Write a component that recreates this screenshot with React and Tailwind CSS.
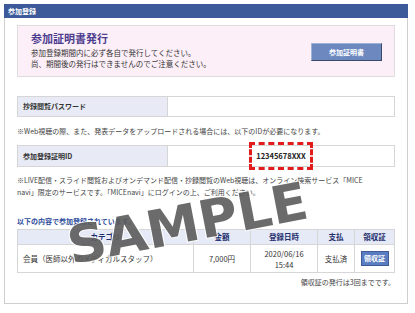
export default function App() {
  const cols = ["w-[176px]", "w-[57px]", "w-[67px]", "w-[37px]", "flex-1"];

  return (
    <div className="relative w-[415px] h-[313px] overflow-hidden bg-white pl-[4px] pt-[4px] font-['Noto_Sans_CJK_JP',sans-serif] text-[#333]">
      <div className="w-[404px] h-[300px] border border-t-0 border-[#cfcfcf] flex flex-col">
        {/* header bar */}
        <div className="h-[14px] -mx-px bg-[#3c5a99] text-white text-[7px] font-bold leading-[14px] pl-[4px]">
          参加登録
        </div>

        <div className="px-[12px]">
          {/* certificate box */}
          <div className="mt-[7px] h-[52px] border border-[#dddddd] bg-[#fdeff8] flex items-center justify-between pl-[13px] pr-[12px]">
            <div className="self-start pt-[5px]">
              <h2 className="text-[11px] leading-[14px] font-bold text-[#4d3d8f]">参加証明書発行</h2>
              <p className="mt-[2px] text-[7.5px] leading-[11px] text-[#333]">
                参加登録期間内に必ず各自で発行してください。
                <br />
                尚、期間後の発行はできませんのでご注意ください。
              </p>
            </div>
            <button className="mt-[2px] w-[71px] h-[18px] bg-[#6d88bf] border border-t-[#9fb2d8] border-l-[#9fb2d8] border-r-[#3a4a6a] border-b-[#3a4a6a] text-white text-[7px] font-bold">
              参加証明書
            </button>
          </div>

          {/* password row */}
          <div className="mt-[19px] h-[21px] flex border border-[#d6d6d6]">
            <div className="w-[150px] bg-[#e8ebf5] border-r border-[#d6d6d6] flex items-center pl-[5px] text-[7px] font-bold text-[#333]">
              抄録閲覧パスワード
            </div>
            <div className="flex-1 bg-white" />
          </div>

          <p className="mt-[9px] whitespace-nowrap text-[7px] leading-[11px] text-[#444]">
            ※Web視聴の際、また、発表データをアップロードされる場合には、以下のIDが必要になります。
          </p>

          {/* id row */}
          <div className="mt-[8px] h-[22px] flex border border-[#d6d6d6]">
            <div className="w-[150px] bg-[#e8ebf5] border-r border-[#d6d6d6] flex items-center pl-[5px] text-[7px] font-bold text-[#333]">
              参加登録証明ID
            </div>
            <div className="flex-1 bg-white flex items-center justify-center">
              <span className="relative text-[7.5px] font-bold text-[#222] leading-[10px]">
                12345678XXX
                <span className="absolute -left-[7px] -right-[7px] -top-[9px] -bottom-[9px] border-[3px] border-dashed border-[#e21b1b]" />
              </span>
            </div>
          </div>

          <p className="mt-[7px] whitespace-nowrap text-[7px] leading-[12px] text-[#444]">
            ※LIVE配信・スライド閲覧およびオンデマンド配信・抄録閲覧のWeb視聴は、オンライン検索サービス「MICE
            <br />
            navi」限定のサービスです。「MICEnavi」にログインの上、ご利用ください。
          </p>

          <p className="mt-[18px] text-[7px] leading-[11px] font-bold text-[#2b4a9c]">
            以下の内容で参加登録されています。
          </p>

          {/* registration table */}
          <div className="mt-[2px] border border-[#d6d6d6] text-[7.5px]">
            <div className="flex h-[15px] bg-[#e6eaf6] border-b border-[#d6d6d6] font-bold text-[#1f2f6e]">
              {["カテゴリ", "金額", "登録日時", "支払", "領収証"].map((h, i) => (
                <div
                  key={h}
                  className={`${cols[i]} flex items-center justify-center ${i < 4 ? "border-r border-[#d6d6d6]" : ""}`}
                >
                  {h}
                </div>
              ))}
            </div>
            <div className="flex h-[27px] text-[#333]">
              <div className={`${cols[0]} flex items-center pl-[5px] border-r border-[#d6d6d6]`}>
                会員（医師以外のメディカルスタッフ）
              </div>
              <div className={`${cols[1]} flex items-center justify-center border-r border-[#d6d6d6]`}>7,000円</div>
              <div className={`${cols[2]} flex flex-col items-center justify-center leading-[11px] border-r border-[#d6d6d6]`}>
                <span>2020/06/16</span>
                <span>15:44</span>
              </div>
              <div className={`${cols[3]} flex items-center justify-center border-r border-[#d6d6d6]`}>支払済</div>
              <div className={`${cols[4]} flex items-center justify-center`}>
                <button className="w-[28px] h-[15px] bg-[#5a7cc0] border border-[#3f5a94] text-white text-[7px] font-bold">
                  領収証
                </button>
              </div>
            </div>
          </div>

          <p className="mt-[4px] text-right text-[7px] leading-[11px] text-[#444]">
            領収証の発行は3回までです。
          </p>
        </div>
      </div>

      {/* watermark */}
      <div className="pointer-events-none absolute left-[73px] top-[220px] -rotate-[11deg] scale-x-[1.03] origin-bottom-left text-[52px] leading-none font-bold font-['DejaVu_Sans',sans-serif] text-[#5c5c5c] opacity-90 [-webkit-text-stroke:2px_white] [paint-order:stroke_fill]">
        SAMPLE
      </div>
    </div>
  );
}
